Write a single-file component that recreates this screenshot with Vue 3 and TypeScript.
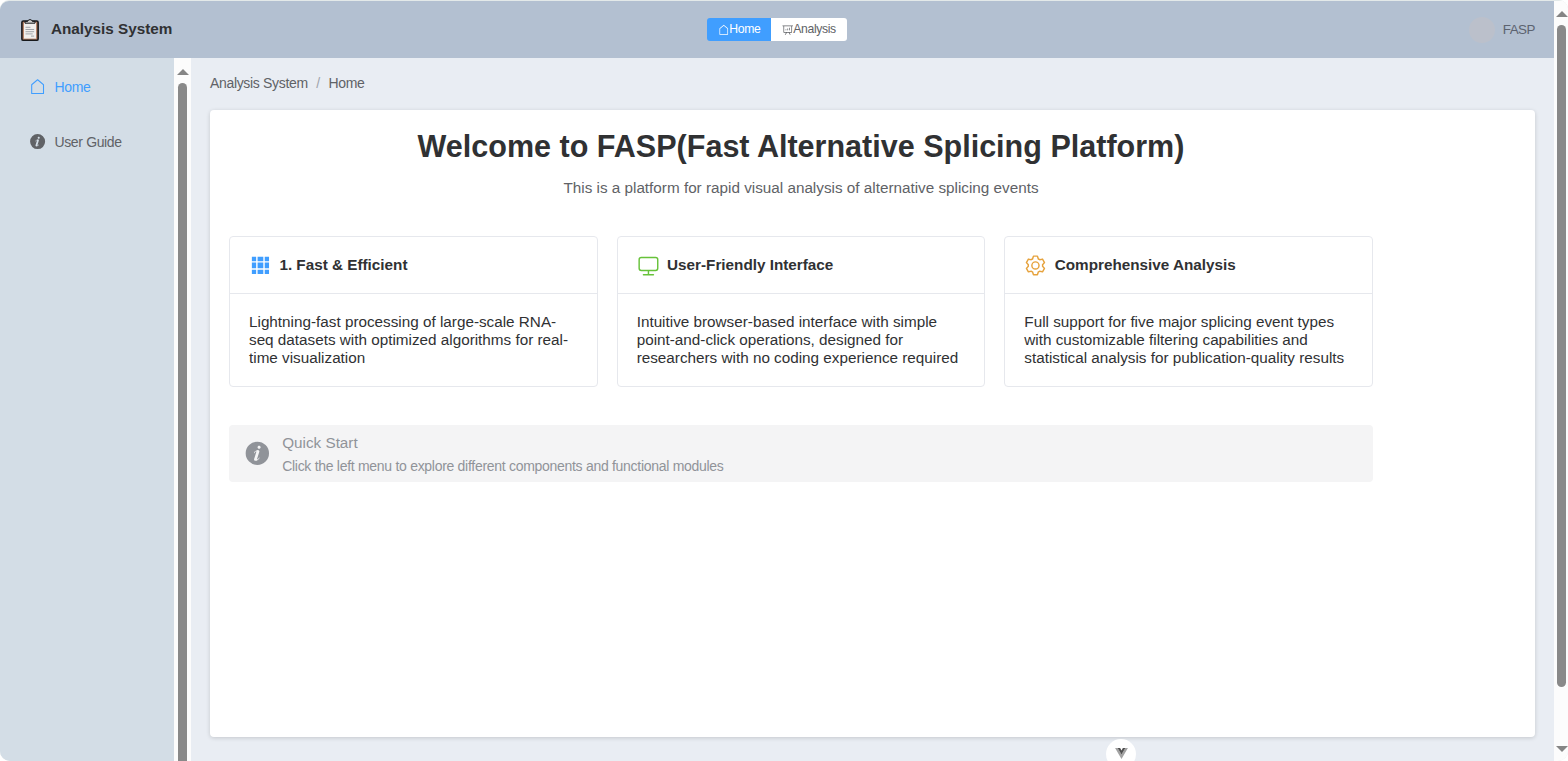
<script setup lang="ts">
interface Feature {
  title: string
  text: string
  tone: string
  icon: string
}

const icons = {
  house:
    'M192 413.952V896h640V413.952L512 147.328zM139.52 374.4l352-293.312a32 32 0 0 1 40.96 0l352 293.312A32 32 0 0 1 896 398.976V928a32 32 0 0 1-32 32H160a32 32 0 0 1-32-32V398.976a32 32 0 0 1 11.52-24.576',
  info: 'M512 64a448 448 0 1 1 0 896.064A448 448 0 0 1 512 64m67.2 275.072c33.28 0 60.288-23.104 60.288-57.344s-27.072-57.344-60.288-57.344c-33.28 0-60.16 23.104-60.16 57.344s26.88 57.344 60.16 57.344M590.912 699.2c0-6.848 2.368-24.64 1.024-34.752l-52.608 60.544c-10.88 11.456-24.512 19.392-30.912 17.28a12.992 12.992 0 0 1-8.256-14.72l87.68-276.992c7.168-35.136-12.544-67.2-54.336-71.296-44.096 0-108.992 44.736-148.48 101.504 0 6.784-1.28 23.68.064 33.792l52.544-60.608c10.88-11.328 23.552-19.328 29.952-17.152a12.8 12.8 0 0 1 7.808 16.128L388.48 728.576c-10.048 32.256 8.96 63.872 55.04 71.04 67.84 0 107.904-43.648 147.456-100.416z',
  grid: 'M640 384v256H384V384zm64 0h192v256H704zm-64 512H384V704h256zm64 0V704h192v192zm-64-768v192H384V128zm64 0h192v192H704zM320 384v256H128V384zm0 512H128V704h192zm0-768v192H128V128z',
  monitor:
    'M544 768v128h192a32 32 0 1 1 0 64H288a32 32 0 1 1 0-64h192V768H192A128 128 0 0 1 64 640V256a128 128 0 0 1 128-128h640a128 128 0 0 1 128 128v384a128 128 0 0 1-128 128zM192 192a64 64 0 0 0-64 64v384a64 64 0 0 0 64 64h640a64 64 0 0 0 64-64V256a64 64 0 0 0-64-64z',
  setting:
    'M600.704 64a32 32 0 0 1 30.464 22.208l35.2 109.376c14.784 7.232 28.928 15.36 42.432 24.512l112.384-24.192a32 32 0 0 1 34.432 15.36L944.32 364.8a32 32 0 0 1-4.032 37.504l-77.12 85.12a357.12 357.12 0 0 1 0 49.024l77.12 85.248a32 32 0 0 1 4.032 37.504l-88.704 153.6a32 32 0 0 1-34.432 15.296L708.8 803.904c-13.44 9.088-27.648 17.28-42.368 24.512l-35.264 109.376A32 32 0 0 1 600.704 960H423.296a32 32 0 0 1-30.464-22.208L357.696 828.48a351.616 351.616 0 0 1-42.56-24.64l-112.32 24.256a32 32 0 0 1-34.432-15.36L79.68 659.2a32 32 0 0 1 4.032-37.504l77.12-85.248a357.12 357.12 0 0 1 0-48.896l-77.12-85.248A32 32 0 0 1 79.68 364.8l88.704-153.6a32 32 0 0 1 34.432-15.296l112.32 24.256c13.568-9.152 27.776-17.408 42.56-24.64l35.2-109.312A32 32 0 0 1 423.232 64H600.64zm-23.424 64H446.72l-36.352 113.088-24.512 11.968a294.113 294.113 0 0 0-34.816 20.096l-22.656 15.36-116.224-25.088-65.28 113.152 79.68 88.192-1.92 27.136a293.12 293.12 0 0 0 0 40.192l1.92 27.136-79.808 88.192 65.344 113.152 116.224-25.024 22.656 15.296a294.113 294.113 0 0 0 34.816 20.096l24.512 11.968L446.72 896h130.688l36.48-113.152 24.448-11.904a288.282 288.282 0 0 0 34.752-20.096l22.592-15.296 116.288 25.024 65.28-113.152-79.744-88.192 1.92-27.136a293.12 293.12 0 0 0 0-40.256l-1.92-27.136 79.808-88.128-65.344-113.152-116.288 24.96-22.592-15.232a287.616 287.616 0 0 0-34.752-20.096l-24.448-11.904L577.344 128zM512 320a192 192 0 1 1 0 384 192 192 0 0 1 0-384m0 64a128 128 0 1 0 0 256 128 128 0 0 0 0-256',
  analysis:
    'm665.216 768 110.848 192h-73.856L591.36 768H433.024L322.176 960H248.32l110.848-192H160a32 32 0 0 1-32-32V192H64a32 32 0 0 1 0-64h896a32 32 0 1 1 0 64h-64v544a32 32 0 0 1-32 32zM832 192H192v512h640zM352 448a32 32 0 0 1 32 32v64a32 32 0 0 1-64 0v-64a32 32 0 0 1 32-32m160-64a32 32 0 0 1 32 32v128a32 32 0 0 1-64 0V416a32 32 0 0 1 32-32m160-64a32 32 0 0 1 32 32v192a32 32 0 1 1-64 0V352a32 32 0 0 1 32-32',
}

const features: Feature[] = [
  {
    title: '1. Fast & Efficient',
    text: 'Lightning-fast processing of large-scale RNA-seq datasets with optimized algorithms for real-time visualization',
    tone: 'blue',
    icon: icons.grid,
  },
  {
    title: 'User-Friendly Interface',
    text: 'Intuitive browser-based interface with simple point-and-click operations, designed for researchers with no coding experience required',
    tone: 'green',
    icon: icons.monitor,
  },
  {
    title: 'Comprehensive Analysis',
    text: 'Full support for five major splicing event types with customizable filtering capabilities and statistical analysis for publication-quality results',
    tone: 'amber',
    icon: icons.setting,
  },
]
</script>

<template>
  <div class="window">
    <div class="app">
      <header class="header">
        <div class="brand">
          <svg class="logo" viewBox="0 0 20 24">
            <rect x="1.9" y="3" width="16.2" height="19.3" rx="1.4" fill="#b9856a" stroke="#17181b" stroke-width="1.6" />
            <rect x="4" y="4.6" width="12" height="16" fill="#f1efed" />
            <path d="M5 5.2V3.4h2.6a2.5 2.5 0 0 1 4.8 0H15v1.8z" fill="#d3d3d2" stroke="#17181b" stroke-width="1" />
            <path d="M5.5 9.3h5M5.5 11.5h8.6M5.5 13.7h8.6M5.5 15.9h7.2M11 18.1h3.1" stroke="#8e9297" stroke-width=".8" />
          </svg>
          <span class="brand-name">Analysis System</span>
        </div>
        <nav class="switch">
          <button class="switch-item active">
            <svg viewBox="0 0 1024 1024"><path :d="icons.house" /></svg><span>Home</span>
          </button>
          <button class="switch-item">
            <svg viewBox="0 0 1024 1024"><path :d="icons.analysis" /></svg><span>Analysis</span>
          </button>
        </nav>
        <div class="user"><span class="avatar"></span><span>FASP</span></div>
      </header>

      <div class="body">
        <aside class="sidebar">
          <a class="menu-item active"><svg viewBox="0 0 1024 1024"><path :d="icons.house" /></svg>Home</a>
          <a class="menu-item"><svg viewBox="0 0 1024 1024"><path :d="icons.info" /></svg>User Guide</a>
        </aside>
        <div class="side-scroll">
          <i class="arrow-up"></i>
          <i class="thumb"></i>
        </div>
        <main class="main">
          <div class="crumbs"><span>Analysis System</span><span class="sep">/</span><span>Home</span></div>
          <section class="panel">
            <div class="content">
              <h1>Welcome to FASP(Fast Alternative Splicing Platform)</h1>
              <p class="subtitle">This is a platform for rapid visual analysis of alternative splicing events</p>
              <div class="cards">
                <article v-for="f in features" :key="f.title" class="card">
                  <div class="card-head">
                    <svg :class="f.tone" viewBox="0 0 1024 1024"><path :d="f.icon" /></svg>
                    <span>{{ f.title }}</span>
                  </div>
                  <div class="card-text">{{ f.text }}</div>
                </article>
              </div>
              <div class="alert">
                <svg viewBox="0 0 1024 1024"><path :d="icons.info" /></svg>
                <div class="alert-body">
                  <div class="alert-title">Quick Start</div>
                  <div class="alert-text">Click the left menu to explore different components and functional modules</div>
                </div>
              </div>
            </div>
          </section>
        </main>
      </div>
    </div>
    <div class="page-scroll">
      <i class="arrow-up"></i>
      <i class="thumb"></i>
      <i class="arrow-down"></i>
    </div>
    <div class="devtools">
      <svg viewBox="0 0 14 12">
        <path d="M0 0h2.8L7 7.2 11.2 0H14L7 12z" fill="#a2a2a2" />
        <path d="M2.8 0h2.7L7 2.6 8.5 0h2.7L7 7.2z" fill="#505050" />
      </svg>
    </div>
  </div>
</template>

<style>
body {
  margin: 0;
  background: #fff;
  overflow: hidden;
}
</style>

<style scoped>
.window {
  position: relative;
  display: flex;
  width: 1568px;
  height: 761px;
  box-sizing: border-box;
  padding-top: 1px;
  overflow: hidden;
  background: #e3e9e9;
  border-radius: 9px 9px 10px 10px;
  font-family: 'Liberation Sans', Arial, sans-serif;
  color: #303133;
}
svg {
  display: block;
  flex: none;
  fill: currentColor;
}
.app {
  flex: 1;
  display: flex;
  flex-direction: column;
  overflow: hidden;
  border-top-left-radius: 9px;
}
.header {
  flex: none;
  display: grid;
  grid-template-columns: 1fr auto 1fr;
  align-items: center;
  height: 57px;
  box-sizing: border-box;
  padding: 0 19px 0 20px;
  background: #b3c0d1;
}
.brand {
  display: flex;
  align-items: center;
  gap: 11px;
}
.logo {
  width: 20px;
  height: 24px;
  margin-top: 1px;
}
.brand-name {
  font-size: 15.27px;
  font-weight: 700;
  margin-top: -2px;
}
.switch {
  display: flex;
  height: 23px;
  margin-right: 1px;
}
.switch-item {
  display: flex;
  align-items: center;
  box-sizing: border-box;
  width: 75.5px;
  height: 23px;
  padding: 0 0 0 10.5px;
  border: 0;
  border-radius: 0 3px 3px 0;
  background: #fff;
  color: #606266;
  font: 12.2px 'Liberation Sans', Arial, sans-serif;
  letter-spacing: -0.35px;
  white-space: nowrap;
}
.switch-item.active {
  width: 64px;
  border-radius: 3px 0 0 3px;
  background: #409eff;
  color: #fff;
}
.switch-item svg {
  width: 11.5px;
  height: 11.5px;
  margin-top: 1px;
}
.switch-item span {
  margin-top: -1px;
}
.user {
  display: flex;
  justify-content: flex-end;
  align-items: center;
  gap: 8px;
  font-size: 13.4px;
  letter-spacing: -0.5px;
  color: #5c6370;
}
.avatar {
  width: 26px;
  height: 26px;
  border-radius: 50%;
  background: #bbc0cb;
}
.body {
  flex: 1;
  display: flex;
  min-height: 0;
}
.sidebar {
  width: 174px;
  flex: none;
  box-sizing: border-box;
  padding-top: 1px;
  background: #d3dde6;
}
.menu-item {
  display: flex;
  align-items: center;
  gap: 8px;
  height: 55px;
  padding-left: 29.3px;
  font-size: 14px;
  letter-spacing: -0.36px;
  color: #606266;
}
.menu-item.active {
  color: #409eff;
}
.menu-item svg {
  width: 17.2px;
  height: 17.2px;
}
.side-scroll,
.page-scroll {
  display: flex;
  flex-direction: column;
  align-items: center;
  flex: none;
  background: #fcfcfc;
}
.side-scroll {
  width: 17px;
}
.page-scroll {
  width: 14px;
}
.arrow-up,
.arrow-down {
  width: 0;
  height: 0;
  border: 6px solid transparent;
}
.arrow-up {
  border-top: 0;
  border-bottom: 6px solid #858585;
}
.arrow-down {
  border-bottom: 0;
  border-top: 6px solid #858585;
}
.page-scroll .arrow-up,
.page-scroll .arrow-down {
  margin-left: 1px;
}
.side-scroll .arrow-up {
  margin-top: 11px;
}
.side-scroll .thumb {
  flex: 1;
  width: 9px;
  margin: 8px 0 0 0;
  border-radius: 5px 5px 0 0;
  background: #898989;
}
.page-scroll .arrow-up {
  margin-top: 10px;
}
.page-scroll .thumb {
  width: 9px;
  height: 662px;
  margin: 8px 0 59px 1px;
  border-radius: 5px;
  background: #898989;
}
.main {
  flex: 1;
  display: flex;
  flex-direction: column;
  box-sizing: border-box;
  padding: 18px 19px 24px;
  background: #e9edf3;
}
.crumbs {
  display: flex;
  height: 15px;
  line-height: 15px;
  margin-bottom: 19px;
  font-size: 14px;
  letter-spacing: -0.33px;
  color: #606266;
}
.sep {
  margin: 0 8.6px;
  color: #a0a4ab;
}
.panel {
  flex: 1;
  box-sizing: border-box;
  padding: 19px;
  border-radius: 4px;
  background: #fff;
  box-shadow: 0 1px 4px rgba(0, 0, 0, 0.16);
}
.content {
  width: 1144px;
}
h1 {
  margin: 0;
  height: 35px;
  line-height: 35px;
  font-size: 30.54px;
  text-align: center;
}
.subtitle {
  margin: 15px 0 0;
  height: 18px;
  line-height: 18px;
  font-size: 15.27px;
  text-align: center;
  color: #606266;
}
.cards {
  display: grid;
  grid-template-columns: repeat(3, 1fr);
  gap: 19px;
  margin-top: 39px;
}
.card {
  box-sizing: border-box;
  height: 151px;
  border: 1px solid #e6e8ed;
  border-radius: 4px;
}
.card-head {
  display: flex;
  align-items: center;
  gap: 7.5px;
  height: 57px;
  box-sizing: border-box;
  padding-left: 19px;
  border-bottom: 1px solid #e6e8ed;
  font-size: 15.27px;
  font-weight: 700;
}
.card-head svg {
  width: 22.9px;
  height: 22.9px;
}
.card-head span {
  margin-top: -2px;
}
.blue {
  color: #409eff;
}
.green {
  color: #67c23a;
}
.amber {
  color: #e6a23c;
}
.card-text {
  padding: 19px;
  font-size: 15.27px;
  line-height: 17.8px;
}
.alert {
  display: flex;
  align-items: center;
  gap: 11.5px;
  height: 57px;
  box-sizing: border-box;
  margin-top: 38px;
  padding-left: 15px;
  border-radius: 4px;
  background: #f4f4f5;
  color: #909399;
}
.alert svg {
  width: 26.7px;
  height: 26.7px;
}
.alert-body {
  padding-top: 2px;
}
.alert-title {
  font-size: 15.27px;
  line-height: 23px;
}
.alert-text {
  font-size: 14px;
  letter-spacing: -0.29px;
  line-height: 24px;
}
.devtools {
  position: absolute;
  left: 1106px;
  top: 739px;
  width: 30px;
  height: 30px;
  border-radius: 50%;
  background: #fff;
}
.devtools svg {
  width: 13px;
  height: 11px;
  margin: 9px auto 0;
}
</style>
